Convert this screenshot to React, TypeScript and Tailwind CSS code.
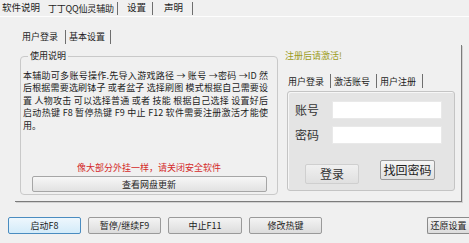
import React from 'react'

const font = "font-['SimSun','Noto_Sans_CJK_SC','Liberation_Sans',sans-serif]"

function Sep({ h = 'h-[13px]' }: { h?: string }) {
  return <span className={`w-px ${h} bg-[#6e6e6e] self-center`} />
}

const lines = [
  '本辅助可多账号操作.先导入游戏路径 → 账号 →密码 →ID  然',
  '后根据需要选刷钵子 或者盆子 选择刷图 模式根据自己需要设',
  '置 人物攻击 可以选择普通 或者 技能 根据自己选择 设置好后',
  '启动热键 F8 暂停热键 F9 中止 F12 软件需要注册激活才能使',
]

function Btn({ label, w, primary }: { label: string; w: string; primary?: boolean }) {
  return (
    <button
      className={`${w} h-[17px] rounded-[2px] border text-[9px] leading-none whitespace-nowrap ${
        primary
          ? 'border-[#4a8cc0] bg-gradient-to-b from-[#eef7fd] to-[#d3ebf9]'
          : 'border-[#9a9a9a] bg-gradient-to-b from-[#f4f4f4] to-[#dcdcdc]'
      }`}
    >
      {label}
    </button>
  )
}

export default function App() {
  return (
    <div className={`w-[469px] h-[243px] overflow-hidden bg-[#f0f0f0] text-[#1c1c1c] ${font}`}>
      {/* top tab strip */}
      <div className="flex h-[17px] border-b border-[#fdfdfd] text-[9.5px] leading-none whitespace-nowrap">
        <span className="w-[46px] pl-[2px] self-center">软件说明</span>
        <span className="w-[71px] pl-[2px] self-center text-[9px] tracking-[-0.2px]">丁丁QQ仙灵辅助</span>
        <Sep />
        <span className="w-[34px] pl-[9px] self-center">设置</span>
        <Sep />
        <span className="w-[39px] pl-[11px] self-center">声明</span>
        <Sep />
      </div>

      <div className="pl-[15px] pt-[11px]">
        {/* inner tabs */}
        <div className="flex h-[17px] text-[9px] leading-none whitespace-nowrap">
          <span className="w-[50px] pl-[7px] self-center">用户登录</span>
          <Sep h="h-[14px]" />
          <span className="w-[44px] pl-[3px] self-center">基本设置</span>
          <Sep h="h-[14px]" />
        </div>

        {/* panel */}
        <div className="flex w-[447px] h-[157px] border-r border-b border-[#7c7c7c] shadow-[1px_1px_0_#d2d2d2]">
          <fieldset className="ml-[5px] mt-[6px] w-[258px] h-[144px] rounded-[4px] border border-[#c9c9c9] px-[2px] flex flex-col">
            <legend className="ml-[5px] px-[2px] text-[9px] leading-[10px]">使用说明</legend>
            <div className="mt-[9px] text-[9px] leading-[12.4px] whitespace-nowrap">
              {lines.map((l) => (
                <div key={l} className="[text-align-last:justify] pr-[7px]">
                  {l}
                </div>
              ))}
              <div>用。</div>
            </div>
            <div className="mt-auto mb-[2px] text-center text-[9px] leading-[12px] text-[#d42a2a]">
              像大部分外挂一样，请关闭安全软件
            </div>
            <button className="mx-auto mb-[2px] w-[235px] h-[16px] rounded-[2px] border border-[#a6a6a6] bg-gradient-to-b from-[#f7f7f7] to-[#e2e2e2] text-[9px] leading-none">
              查看网盘更新
            </button>
          </fieldset>

          <div className="ml-[4px] w-[176px] flex flex-col">
            <div className="pl-[3px] pt-[6px] text-[9px] leading-[10px] text-[#9c9c1c]">注册后请激活!</div>
            <div className="mt-[12px] flex h-[16px] pl-[6px] text-[9px] leading-none whitespace-nowrap">
              <span className="w-[42px] self-center">用户登录</span>
              <Sep h="h-[14px]" />
              <span className="w-[45px] pl-[3px] self-center">激活账号</span>
              <Sep h="h-[14px]" />
              <span className="w-[45px] pl-[3px] self-center">用户注册</span>
              <Sep h="h-[14px]" />
            </div>
            <div className="ml-[5px] mt-[2px] w-[168px] h-[100px] rounded-[3px] border border-[#c4c4c4] bg-[#e4e4e4] shadow-[inset_1px_1px_0_#f6f6f6] flex flex-col">
              <div className="mt-[9px] flex items-center">
                <span className="w-[44px] pl-[7px] text-[12px] leading-none text-[#333]">账号</span>
                <div className="w-[110px] h-[18px] bg-white border border-[#e9e9e9]" />
              </div>
              <div className="mt-[7px] flex items-center">
                <span className="w-[44px] pl-[7px] text-[12px] leading-none text-[#333]">密码</span>
                <div className="w-[110px] h-[18px] bg-white border border-[#e9e9e9]" />
              </div>
              <div className="mt-[16px] flex items-start">
                <button className="ml-[17px] mt-[4px] w-[54px] h-[20px] rounded-[2px] border border-[#cfcfcf] bg-gradient-to-b from-[#f0f0f0] to-[#e0e0e0] text-[12px] leading-none text-[#333]">
                  登录
                </button>
                <button className="ml-[21px] w-[55px] h-[20px] rounded-[2px] border border-[#9a9a9a] bg-gradient-to-b from-[#f6f6f6] to-[#e0e0e0] text-[12px] leading-none text-[#222]">
                  找回密码
                </button>
              </div>
            </div>
          </div>
        </div>
      </div>

      {/* bottom buttons */}
      <div className="mt-[15px] flex pl-[8px] gap-[7px]">
        <Btn label="启动F8" w="w-[73px]" primary />
        <Btn label="暂停/继续F9" w="w-[73px]" />
        <Btn label="中止F11" w="w-[74px]" />
        <Btn label="修改热键" w="w-[73px]" />
        <button className="ml-auto w-[42px] h-[17px] rounded-l-[2px] border border-r-0 border-[#8a8a8a] bg-gradient-to-b from-[#f4f4f4] to-[#dcdcdc] text-[9px] leading-none whitespace-nowrap">
          还原设置
        </button>
      </div>
    </div>
  )
}
